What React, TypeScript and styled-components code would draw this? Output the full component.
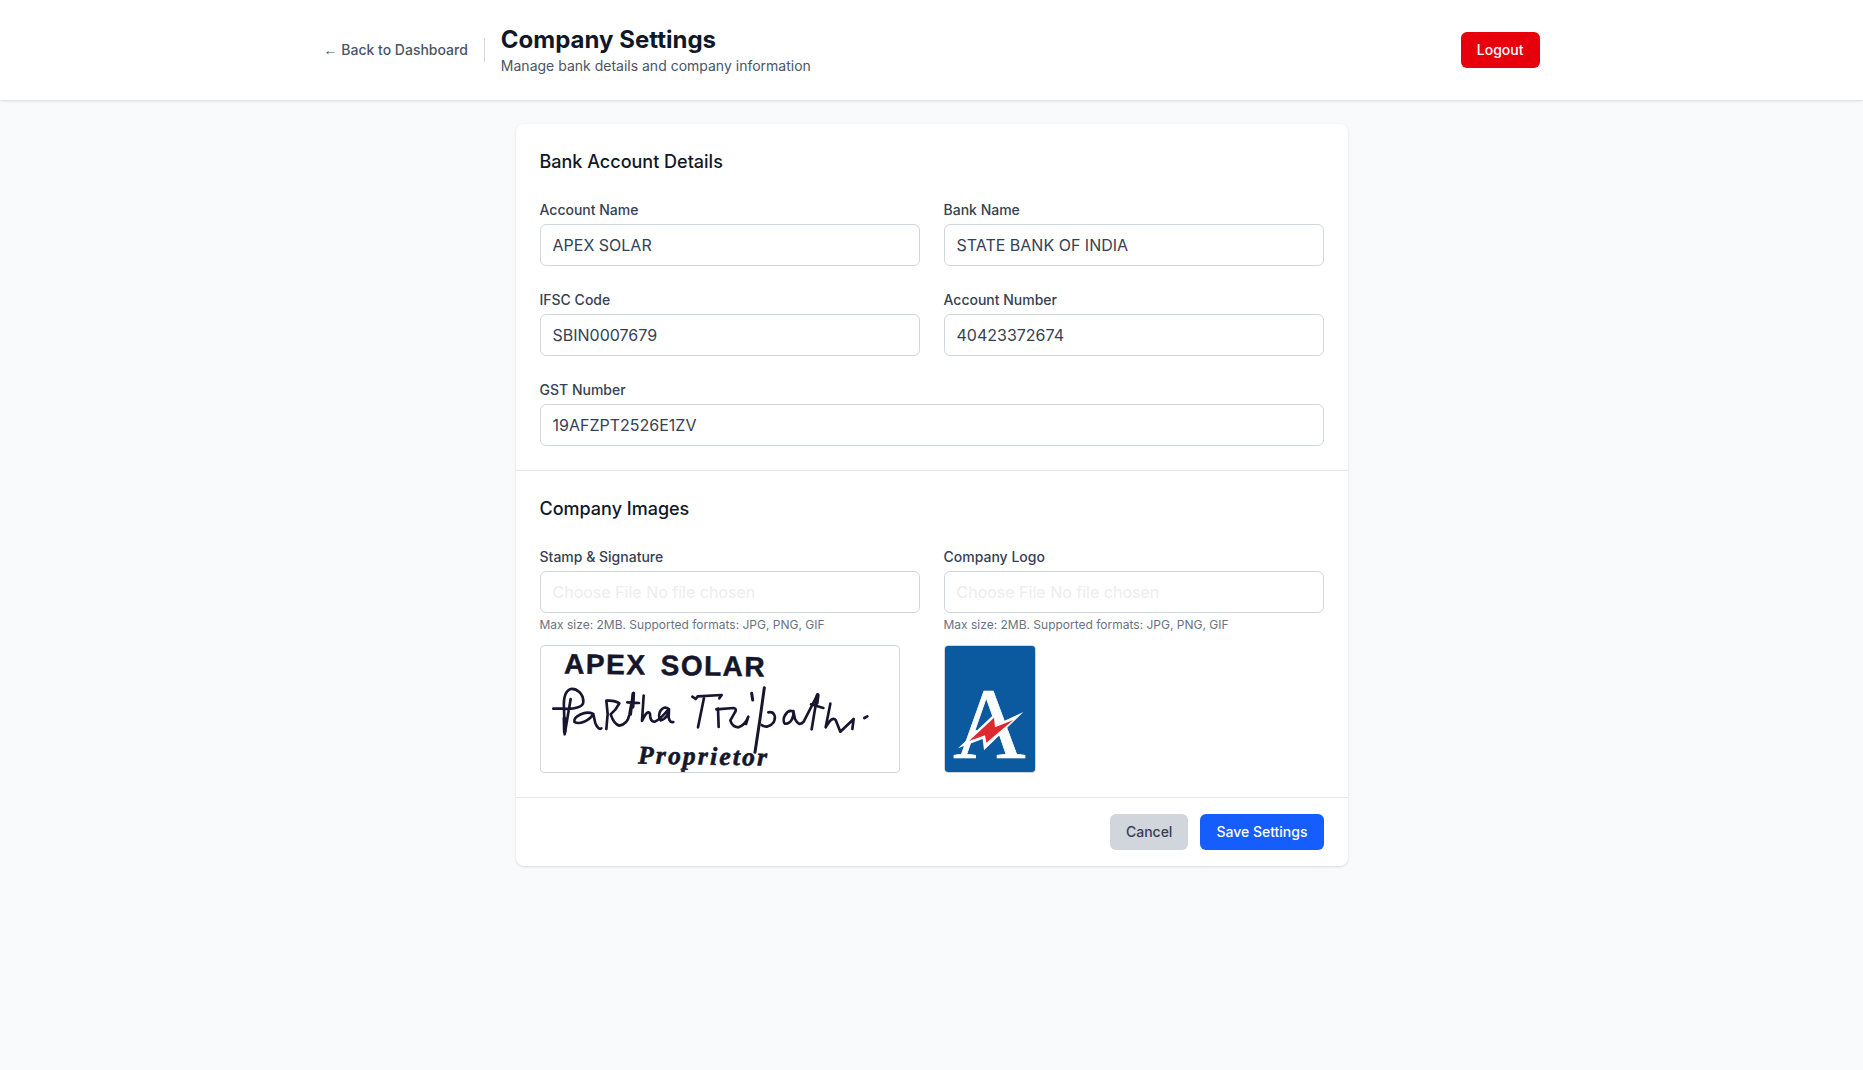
import React from "react";
import styled, { createGlobalStyle } from "styled-components";

const GlobalStyle = createGlobalStyle`
  *, *::before, *::after { box-sizing: border-box; }
  body {
    margin: 0;
    background: #f9fafb;
    color: #171717;
    font-family: Inter, "Liberation Sans", sans-serif;
    font-size: 16px;
    line-height: 24px;
  }
  h1, h2, p { margin: 0; }
  button, input { font: inherit; }
`;

const Page = styled.div`
  min-height: 100vh;
  background: #f9fafb;
`;

const Header = styled.header`
  background: #fff;
  box-shadow: 0 1px 3px rgba(0, 0, 0, 0.1), 0 1px 2px -1px rgba(0, 0, 0, 0.1);
`;

const HeaderInner = styled.div`
  max-width: 1280px;
  margin: 0 auto;
  padding: 24px 32px;
  display: flex;
  align-items: center;
  justify-content: space-between;
`;

const HeaderLeft = styled.div`
  display: flex;
  align-items: center;
  gap: 16px;
`;

const BackLink = styled.a`
  color: #4a5565;
  font-size: 14px;
  line-height: 20px;
  font-weight: 500;
  text-decoration: none;
`;

const Arrow = styled.span`
  font-family: "Liberation Sans", sans-serif;
  font-weight: 400;
  line-height: 1;
`;

const Separator = styled.div`
  width: 1px;
  height: 24px;
  background: #d1d5dc;
`;

const Title = styled.h1`
  color: #101828;
  font-size: 24px;
  line-height: 32px;
  font-weight: 700;
`;

const Subtitle = styled.p`
  color: #4a5565;
  font-size: 14px;
  line-height: 20px;
`;

const tones = {
  danger: { background: "#e7000b", color: "#fff" },
  neutral: { background: "#d1d5dc", color: "#364153" },
  primary: { background: "#155dfc", color: "#fff" },
};

const Button = styled.button<{ $tone: keyof typeof tones }>`
  border: 0;
  border-radius: 6px;
  padding: 8px 16px;
  font-size: 14px;
  line-height: 20px;
  font-weight: 500;
  cursor: pointer;
  background: ${({ $tone }) => tones[$tone].background};
  color: ${({ $tone }) => tones[$tone].color};
`;

const Main = styled.main`
  max-width: 896px;
  margin: 0 auto;
  padding: 24px 32px;
`;

const Card = styled.form`
  background: #fff;
  border-radius: 8px;
  box-shadow: 0 1px 3px rgba(0, 0, 0, 0.1), 0 1px 2px -1px rgba(0, 0, 0, 0.1);
`;

const Section = styled.section`
  padding: 24px;
  border-bottom: 1px solid #e5e7eb;
`;

const SectionTitle = styled.h2`
  margin-bottom: 24px;
  color: #101828;
  font-size: 18px;
  line-height: 28px;
  font-weight: 500;
`;

const FieldGrid = styled.div`
  display: grid;
  grid-template-columns: 1fr 1fr;
  gap: 24px;
`;

const Field = styled.div<{ $wide?: boolean }>`
  grid-column: ${({ $wide }) => ($wide ? "span 2" : "auto")};
  display: flex;
  flex-direction: column;
  align-items: flex-start;
`;

const Label = styled.label`
  margin-bottom: 4px;
  color: #364153;
  font-size: 14px;
  line-height: 20px;
  font-weight: 500;
`;

const Input = styled.input`
  width: 100%;
  height: 42px;
  padding: 8px 12px;
  border: 1px solid #d1d5dc;
  border-radius: 6px;
  background: #fff;
  color: #364153;
  outline: none;
`;

const FileBox = styled.div`
  width: 100%;
  height: 42px;
  padding: 8px 12px;
  border: 1px solid #d1d5dc;
  border-radius: 6px;
  color: #ededed;
`;

const Hint = styled.p`
  margin-top: 4px;
  color: #6a7282;
  font-size: 12px;
  line-height: 16px;
`;

const Preview = styled.div`
  display: flex;
  margin-top: 12px;
  border: 1px solid #d1d5dc;
  border-radius: 4px;

  svg { overflow: visible; }
`;

const Footer = styled.div`
  display: flex;
  justify-content: flex-end;
  gap: 12px;
  padding: 16px 24px;
`;

const Signature = () => (
  <svg width="358" height="126" viewBox="0 0 358 126">
    <g fill="#15152b" stroke="#15152b">
      <text
        x="23" y="27.4" fontFamily="Liberation Sans, sans-serif" fontWeight="700" fontSize="28"
        strokeWidth="0.5" textLength="81" transform="rotate(0.8 23 27.4)"
      >APEX</text>
      <text
        x="119.5" y="29" fontFamily="Liberation Sans, sans-serif" fontWeight="700" fontSize="28"
        strokeWidth="0.5" textLength="104" transform="rotate(0.8 119.5 29)"
      >SOLAR</text>
      <text
        x="97" y="117.6" fontFamily="Liberation Serif, serif" fontWeight="700" fontStyle="italic" fontSize="25.5"
        strokeWidth="0.6" textLength="129" transform="rotate(0.9 97 117.6)"
      >Proprietor</text>
    </g>
    <ellipse cx="142" cy="125" rx="2.5" ry="1" fill="#15152b" />
    <g fill="none" stroke="#171530" strokeWidth="8" strokeLinecap="round" strokeLinejoin="round">
      <g transform="translate(-1 29) scale(0.33333)">
        <path d="M40 101H75C100 103 130 97 130 80C130 55 110 40 92 42C75 48 70 70 72 100L74 178L92 72" />
        <path d="M160 117C135 105 100 125 103 140C115 150 145 140 160 118L166 145Q175 166 184 160" />
        <path d="M199 162L203 117L199 77Q225 75 238 85Q228 105 212 118Q222 148 238 152Q262 148 268 120L280 54L272 118M262 82L297 84" />
        <path d="M311 62L306 138Q322 102 330 116Q330 142 345 140Q362 132 386 102C368 86 348 118 362 136C376 134 388 115 387 102L386 128Q390 144 400 141" />
        <path d="M280 56L278 96M73 130L74 170" strokeWidth="11" />
      </g>
      <g transform="translate(144 29) scale(0.33333)">
        <path d="M22 65L32 72L38 64L110 60L103 70M57 68L39 157" />
        <path d="M101 156L99 101L94 103L146 99Q158 101 148 115L136 136Q142 156 160 157Q180 150 190 125L183 147" />
        <path d="M200 55L203 75M238 38L226 125L210 232" strokeWidth="9" />
        <path d="M250 112C268 108 274 125 266 142C256 156 240 158 230 150" />
        <path d="M325 110C305 100 288 135 300 146C318 148 328 125 325 108L330 132Q342 156 356 140L397 60L380 163M378 88L415 99" />
        <path d="M398 60L395 84" strokeWidth="12" />
        <path d="M436 86L422 157Q442 122 452 135L466 170L506 132L502 162M538 129L547 124" />
      </g>
    </g>
  </svg>
);

const Logo = () => (
  <svg width="90" height="126" viewBox="30 18 270 378">
    <rect x="30" y="18" width="270" height="378" rx="9" fill="#0b5a9f" />
    <text
      x="54" y="355" fontFamily="Liberation Serif, serif" fontSize="302"
      fill="#fff" stroke="#fff" strokeWidth="2"
    >A</text>
    <path d="M265 216L147 331L143 297L69 325L181 219L186 253Z" fill="#fff" />
    <path d="M235 240L154 308L150 286L102 303L177 233L180 262Z" fill="#de2a2e" />
  </svg>
);

const bankFields = [
  { label: "Account Name", value: "APEX SOLAR" },
  { label: "Bank Name", value: "STATE BANK OF INDIA" },
  { label: "IFSC Code", value: "SBIN0007679" },
  { label: "Account Number", value: "40423372674" },
  { label: "GST Number", value: "19AFZPT2526E1ZV", wide: true },
];

const imageFields = [
  { label: "Stamp & Signature", Picture: Signature },
  { label: "Company Logo", Picture: Logo },
];

export default function App() {
  return (
    <Page>
      <GlobalStyle />
      <Header>
        <HeaderInner>
          <HeaderLeft>
            <BackLink><Arrow>←</Arrow> Back to Dashboard</BackLink>
            <Separator />
            <div>
              <Title>Company Settings</Title>
              <Subtitle>Manage bank details and company information</Subtitle>
            </div>
          </HeaderLeft>
          <Button $tone="danger">Logout</Button>
        </HeaderInner>
      </Header>
      <Main>
        <Card onSubmit={(e) => e.preventDefault()}>
          <Section>
            <SectionTitle>Bank Account Details</SectionTitle>
            <FieldGrid>
              {bankFields.map(({ label, value, wide }) => (
                <Field key={label} $wide={wide}>
                  <Label>{label}</Label>
                  <Input defaultValue={value} />
                </Field>
              ))}
            </FieldGrid>
          </Section>
          <Section>
            <SectionTitle>Company Images</SectionTitle>
            <FieldGrid>
              {imageFields.map(({ label, Picture }) => (
                <Field key={label}>
                  <Label>{label}</Label>
                  <FileBox>Choose File No file chosen</FileBox>
                  <Hint>Max size: 2MB. Supported formats: JPG, PNG, GIF</Hint>
                  <Preview>
                    <Picture />
                  </Preview>
                </Field>
              ))}
            </FieldGrid>
          </Section>
          <Footer>
            <Button type="button" $tone="neutral">Cancel</Button>
            <Button type="submit" $tone="primary">Save Settings</Button>
          </Footer>
        </Card>
      </Main>
    </Page>
  );
}
